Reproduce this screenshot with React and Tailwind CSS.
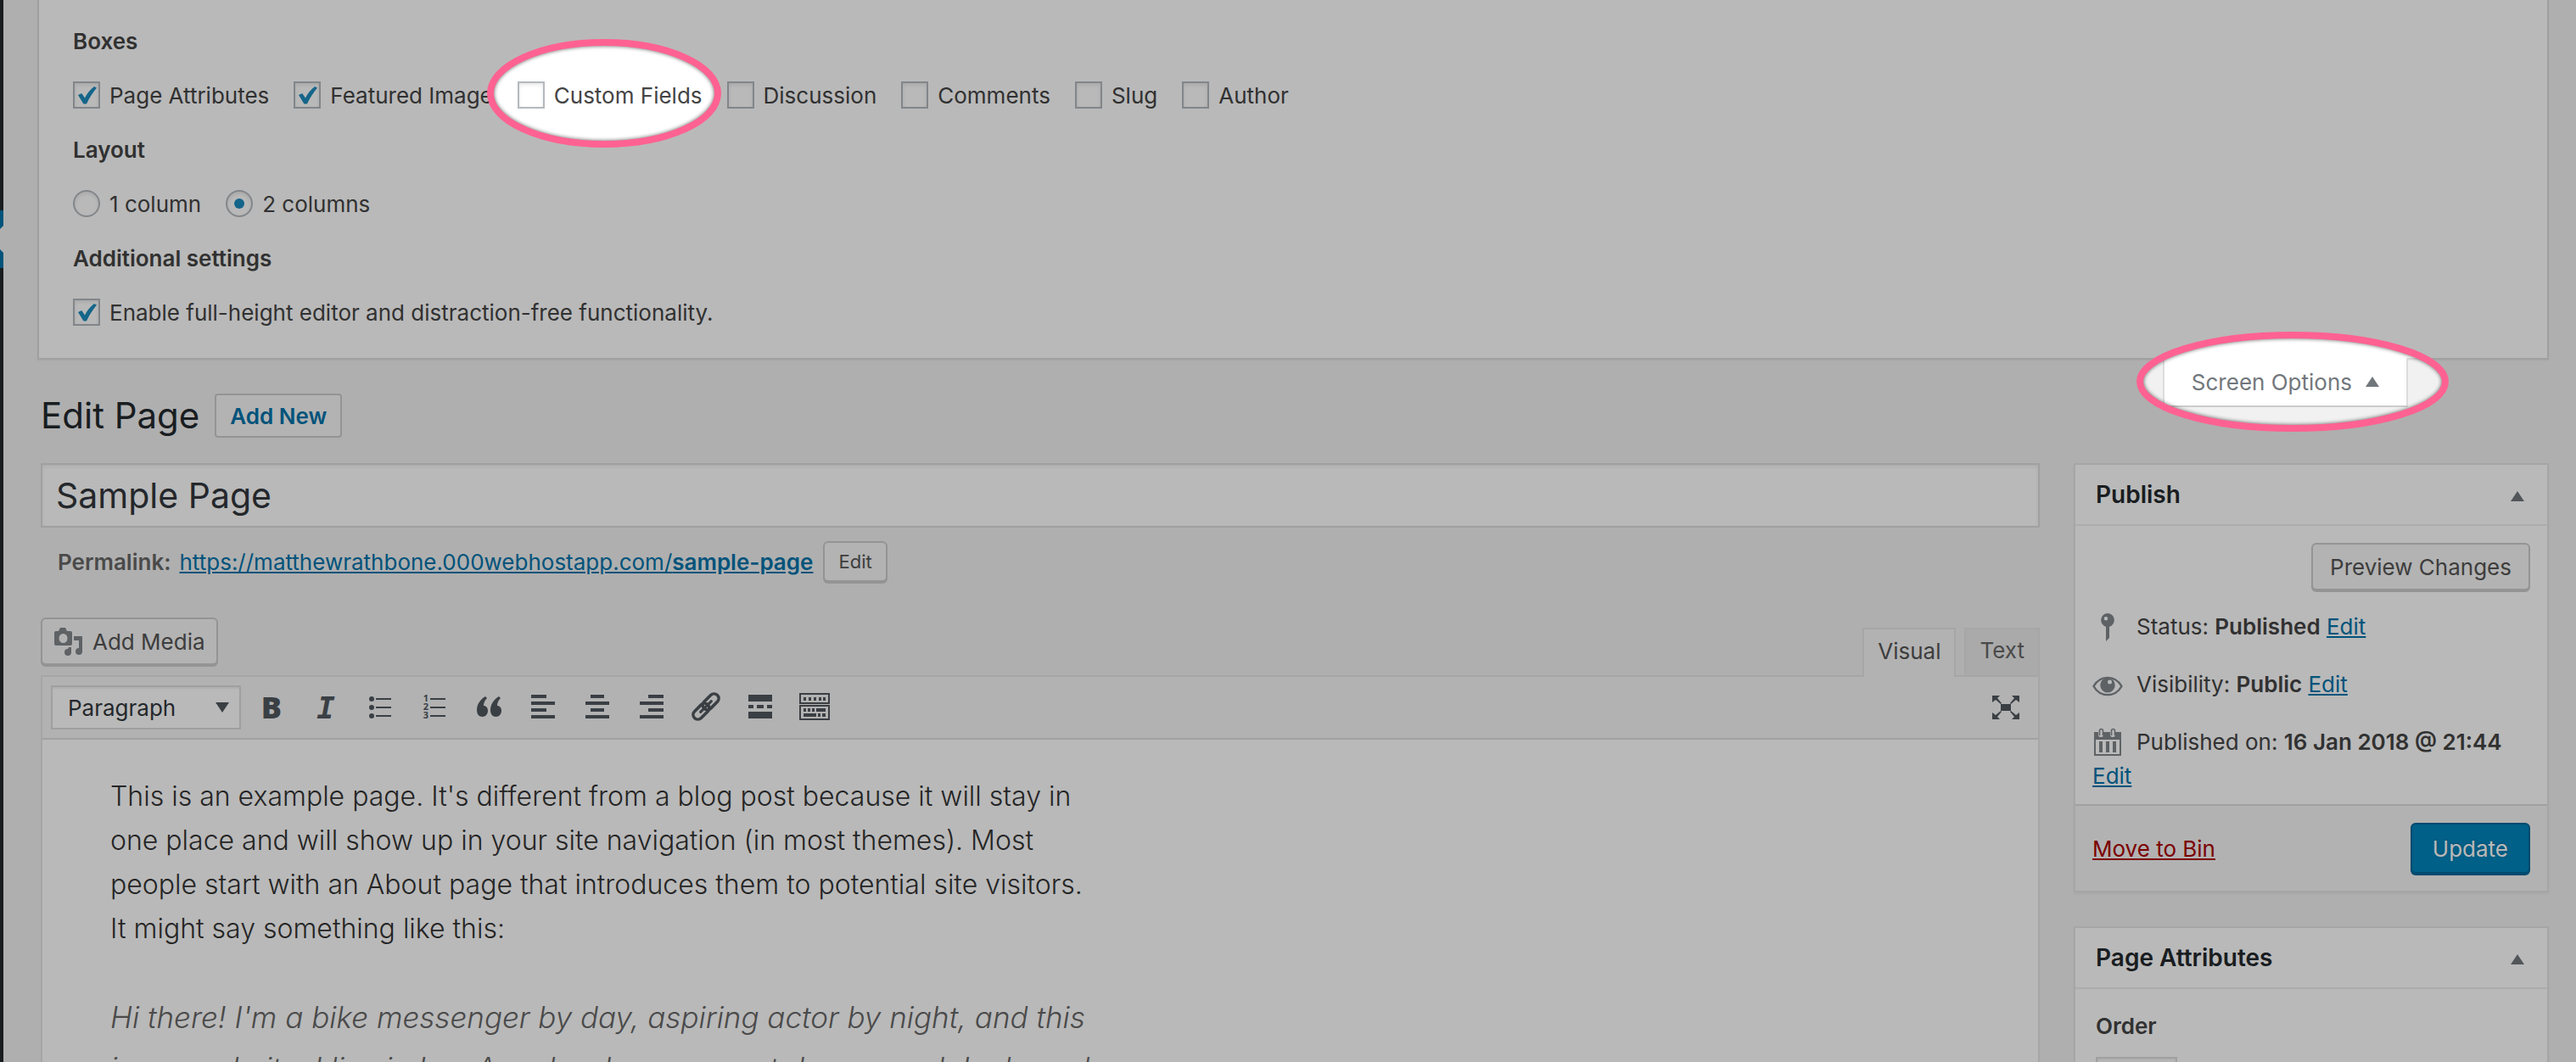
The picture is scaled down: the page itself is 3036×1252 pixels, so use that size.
import { useState } from "react";

const BOXES = [
  { id: "attributes", label: "Page Attributes", on: true },
  { id: "featured", label: "Featured Image", on: true },
  { id: "custom-fields", label: "Custom Fields" },
  { id: "discussion", label: "Discussion" },
  { id: "comments", label: "Comments" },
  { id: "slug", label: "Slug" },
  { id: "author", label: "Author" },
];

const LIGHT_BUTTON =
  "rounded-md border-2 border-[#ccc] bg-[#f7f7f7] text-[#555] shadow-[0_2px_0_#ccc]";

function Checkbox({ id, label, on }) {
  return (
    <label htmlFor={id} className="flex items-center gap-[11px]">
      <span className="grid size-8 place-items-center">
        <input
          id={id}
          type="checkbox"
          defaultChecked={on}
          className="peer col-start-1 row-start-1 size-8 appearance-none border-2 border-[#b4b9be] bg-white shadow-[inset_0_2px_4px_rgba(0,0,0,0.1)]"
        />
        <svg
          viewBox="0 0 32 32"
          className="pointer-events-none invisible col-start-1 row-start-1 size-8 fill-[#1e8cbe] peer-checked:visible"
        >
          <path d="M6 16l4.200-2 3.800 5.500C16.500 14.500 20 9.500 25 6l3 1.600C23.500 13 19.500 19 16 26.500h-3.600z" />
        </svg>
      </span>
      {label}
    </label>
  );
}

function Radio({ id, label, on }) {
  return (
    <label htmlFor={id} className="flex items-center gap-[11px]">
      <span className="grid size-8 place-items-center">
        <input
          id={id}
          type="radio"
          name="layout"
          defaultChecked={on}
          className="peer col-start-1 row-start-1 size-8 appearance-none rounded-full border-2 border-[#b4b9be] bg-white shadow-[inset_0_2px_4px_rgba(0,0,0,0.1)]"
        />
        <span className="pointer-events-none invisible col-start-1 row-start-1 size-3 rounded-full bg-[#1e8cbe] peer-checked:visible" />
      </span>
      {label}
    </label>
  );
}

function Triangle({ className }) {
  return (
    <svg viewBox="0 0 16 12" className={className} fill="currentColor">
      <path d="M8 0l8 12H0z" />
    </svg>
  );
}

function ToolIcon({ children }) {
  return (
    <svg viewBox="0 0 40 40" className="size-10 overflow-visible" fill="currentColor">
      {children}
    </svg>
  );
}

const TOOLS = [
  {
    name: "Bold",
    icon: (
      <text x="20" y="33" textAnchor="middle" fontFamily="Open Sans" fontWeight="800" fontSize="36">
        B
      </text>
    ),
  },
  {
    name: "Italic",
    icon: (
      <text x="20" y="33" textAnchor="middle" fontFamily="DejaVu Sans Mono" fontStyle="italic" fontWeight="700" fontSize="36">
        I
      </text>
    ),
  },
  {
    name: "Bulleted list",
    icon: (
      <>
        <circle cx="10" cy="10" r="3" />
        <circle cx="10" cy="20" r="3" />
        <circle cx="10" cy="30" r="3" />
        <path d="M15 9h18v2H15zM15 19h18v2H15zM15 29h18v2H15z" />
      </>
    ),
  },
  {
    name: "Numbered list",
    icon: (
      <>
        <g fontFamily="Open Sans" fontWeight="700" fontSize="11" textAnchor="middle">
          <text x="10" y="13">1</text>
          <text x="10" y="23">2</text>
          <text x="10" y="33">3</text>
        </g>
        <path d="M15 9h18v2H15zM15 19h18v2H15zM15 29h18v2H15z" />
      </>
    ),
  },
  {
    name: "Blockquote",
    icon: (
      <>
        <path d="M16 7l2 2c-3 3-4 6-4 9 3 0 5 2.500 5 6s-2.500 7-6.500 7S6 28 6 23c0-6 3.500-12 10-16z" />
        <path d="M32 7l2 2c-3 3-4 6-4 9 3 0 5 2.500 5 6s-2.500 7-6.500 7S22 28 22 23c0-6 3.500-12 10-16z" />
      </>
    ),
  },
  {
    name: "Align left",
    icon: <path d="M6 5h18v4H6zM6 13h28v4H6zM6 21h18v4H6zM6 29h28v4H6z" />,
  },
  {
    name: "Align centre",
    icon: <path d="M12 5h16v4H12zM6 13h28v4H6zM12 21h16v4H12zM6 29h28v4H6z" />,
  },
  {
    name: "Align right",
    icon: <path d="M16 5h18v4H16zM6 13h28v4H6zM16 21h18v4H16zM6 29h28v4H6z" />,
  },
  {
    name: "Insert link",
    icon: (
      <g transform="translate(20 19) rotate(-45)" fill="none" stroke="currentColor" strokeWidth="3.600">
        <rect x="-19" y="-5.500" width="22" height="11" rx="5.500" />
        <rect x="-3" y="-5.500" width="22" height="11" rx="5.500" />
        <path d="M-9 0H9" strokeWidth="3" strokeLinecap="round" />
      </g>
    ),
  },
  {
    name: "Read more tag",
    icon: <path d="M6 5h28v8H6zM6 17h6v4H6zM16 17h8v4h-8zM28 17h6v4h-6zM6 25h28v8H6z" />,
  },
  {
    name: "Toolbar toggle",
    icon: (
      <>
        <path d="M3 4h34v11H3zM3 18h34v16H3z" fill="none" stroke="currentColor" strokeWidth="2" />
        <path d="M7 8h3v4H7zM13 8h3v4h-3zM19 8h3v4h-3zM25 8h3v4h-3zM30 8h3v4h-3z" />
        <path d="M7 21h3v4H7zM12 21h3v4h-3zM17 21h3v4h-3zM22 21h11v4H22zM7 27h15v4H7zM24 27h3v4h-3zM29 27h4v4h-4z" />
      </>
    ),
  },
];

function ScreenOptions() {
  return (
    <section className="mr-8 ml-10 border-x-2 border-b-2 border-[#ddd] bg-white pt-4 pb-[22px] pl-10 shadow-[0_1px_2px_rgba(0,0,0,0.05)]">
      <h2 className="flex h-16 items-center font-semibold">Boxes</h2>
      <div className="flex h-16 items-center gap-[29px]">
        {BOXES.map((box) => (
          <Checkbox key={box.id} {...box} />
        ))}
      </div>
      <h2 className="flex h-16 items-center font-semibold">Layout</h2>
      <div className="flex h-16 items-center gap-[29px]">
        <Radio id="one-column" label="1 column" />
        <Radio id="two-columns" label="2 columns" on />
      </div>
      <h2 className="flex h-16 items-center font-semibold">Additional settings</h2>
      <div className="flex h-16 items-center">
        <Checkbox
          id="full-height"
          label="Enable full-height editor and distraction-free functionality."
          on
        />
      </div>
    </section>
  );
}

function Editor() {
  return (
    <div>
      <div className="flex h-[68px] justify-between">
        <button className={`flex h-14 items-center gap-[10px] px-[13px] ${LIGHT_BUTTON}`}>
          <svg viewBox="0 0 36 36" className="size-9" fill="#82878c">
            <path
              fillRule="evenodd"
              d="M8 2h6l2 4h4a2 2 0 0 1 2 2v13a2 2 0 0 1-2 2H3a2 2 0 0 1-2-2V8a2 2 0 0 1 2-2h3zM11.500 9a5 5.500 0 1 0 0 11 5 5.500 0 0 0 0-11z"
            />
            <path d="M24 12h10v18a4 4 0 1 1-4-4V17h-6zM21 25v6a4 4 0 1 1-4-4l1-2z" />
          </svg>
          Add Media
        </button>
        <div className="-mb-[2px] flex items-end gap-[10px]">
          <button className="h-[58px] border-2 border-b-0 border-[#e5e5e5] bg-[#f5f5f5] px-4 pb-[6px] text-[#555]">
            Visual
          </button>
          <button className="h-[58px] border-2 border-[#e5e5e5] bg-[#ebebeb] px-4 pb-[6px] text-[#666]">
            Text
          </button>
        </div>
      </div>
      <div className="border-2 border-[#e5e5e5] bg-white">
        <div className="flex h-[74px] items-center border-b-2 border-[#ddd] bg-[#f5f5f5] px-[10px] text-[#50575e]">
          <div className="mr-1 grid w-56 items-center">
            <select
              aria-label="Format"
              className="col-start-1 row-start-1 h-[52px] appearance-none border-2 border-[#ddd] bg-white pl-[18px] text-[#32373c] shadow-[inset_0_2px_2px_rgba(0,0,0,0.06)]"
            >
              <option>Paragraph</option>
              <option>Heading 1</option>
            </select>
            <Triangle className="pointer-events-none col-start-1 row-start-1 mr-[14px] h-3 w-4 rotate-180 justify-self-end" />
          </div>
          {TOOLS.map((tool) => (
            <button key={tool.name} aria-label={tool.name} className="grid w-16 place-items-center">
              <ToolIcon>{tool.icon}</ToolIcon>
            </button>
          ))}
          <button aria-label="Distraction-free writing mode" className="mr-2 ml-auto">
            <ToolIcon>
              <path d="M14 16h12v8H14z" />
              <path d="M4 6h9l-3 3 5 6-1 1-6-5-4 3zM36 6h-9l3 3-5 6 1 1 6-5 4 3zM4 34h9l-3-3 5-6-1-1-6 5-4-3zM36 34h-9l3-3-5-6 1-1 6 5 4-3z" />
            </ToolIcon>
          </button>
        </div>
        <div className="px-20 pt-[41px] text-[32px] leading-[52px] font-light text-[#333]">
          <p className="max-w-[1164px]">
            This is an example page. It's different from a blog post because it will stay in one
            place and will show up in your site navigation (in most themes). Most people start with
            an About page that introduces them to potential site visitors. It might say something
            like this:
          </p>
          <blockquote className="mt-12 max-w-[1164px] text-[35px] leading-[60px] text-[#666] italic">
            Hi there! I'm a bike messenger by day, aspiring actor by night, and this is my website. I
            live in Los Angeles, have a great dog named Jack, and I like piña coladas.
          </blockquote>
        </div>
      </div>
    </div>
  );
}

function Panel({ title, children }) {
  const [open, setOpen] = useState(true);

  return (
    <section className="border-2 border-[#e5e5e5] bg-white shadow-[0_2px_2px_rgba(0,0,0,0.04)]">
      <div className="flex h-[72px] items-center justify-between border-b-2 border-[#eee] pr-[27px] pl-6">
        <h2 className="text-[28px] font-semibold text-[#23282d]">{title}</h2>
        <button aria-label={`Toggle ${title}`} onClick={() => setOpen(!open)}>
          <Triangle className="mt-1 h-3 w-4 text-[#72777c]" />
        </button>
      </div>
      {open && children}
    </section>
  );
}

function EditLink() {
  return (
    <a href="#edit" className="text-[#0073aa] underline">
      Edit
    </a>
  );
}

function Publish() {
  return (
    <Panel title="Publish">
      <div className="px-5 pt-5 pb-[13px]">
        <div className="mb-[9px] flex justify-end">
          <button className={`h-14 px-5 ${LIGHT_BUTTON}`}>Preview Changes</button>
        </div>
        <p className="flex items-center py-[14px] leading-10">
          <svg viewBox="0 0 36 40" className="mr-4 h-10 w-9" fill="#82878c">
            <path
              fillRule="evenodd"
              d="M18 4a8 8 0 0 1 2 15.700V33l-4 4V19.700A8 8 0 0 1 18 4zM16 8a2.200 2.200 0 1 0 0 4.400A2.200 2.200 0 0 0 16 8z"
            />
          </svg>
          <span>
            Status: <b className="font-semibold">Published</b> <EditLink />
          </span>
        </p>
        <p className="flex items-center py-[14px] leading-10">
          <svg viewBox="0 0 36 40" className="mr-4 h-10 w-9">
            <path
              d="M1.500 22C9 8.500 27 8.500 34.500 22 27 35.500 9 35.500 1.500 22z"
              fill="none"
              stroke="#82878c"
              strokeWidth="2.400"
            />
            <path
              fillRule="evenodd"
              fill="#82878c"
              d="M18 12a8.500 8.500 0 1 1 0 17.500A8.500 8.500 0 0 1 18 12zM20.500 14.500a2.500 2.500 0 1 0 0 5 2.500 2.500 0 0 0 0-5z"
            />
          </svg>
          <span>
            Visibility: <b className="font-semibold">Public</b> <EditLink />
          </span>
        </p>
        <p className="pt-[14px] leading-10">
          <svg viewBox="0 0 36 40" className="mr-4 inline h-10 w-9 align-top" fill="#82878c">
            <path
              fillRule="evenodd"
              d="M2 8h5v3a3 3 0 0 0 6 0V8h8v3a3 3 0 0 0 6 0V8h7v28H2zM4 17v17h28V17z"
            />
            <path d="M8 19h4v13H8zM16 19h4v13h-4zM24 19h4v13h-4z" />
            <path
              d="M8.500 12V6.500a2 2 0 0 1 4 0V12M22.500 12V6.500a2 2 0 0 1 4 0V12"
              fill="none"
              stroke="#82878c"
              strokeWidth="1.600"
            />
          </svg>
          Published on: <b className="font-semibold">16 Jan 2018 @ 21:44</b> <EditLink />
        </p>
      </div>
      <div className="flex h-[102px] items-center justify-between border-t-2 border-[#ddd] bg-[#f5f5f5] px-5">
        <a href="#bin" className="text-[#a00] underline">
          Move to Bin
        </a>
        <button className="h-15 rounded-md border-2 border-[#006799] bg-[#0085ba] px-6 text-white shadow-[0_2px_0_#006799] text-shadow-[0_-1px_2px_#006799]">
          Update
        </button>
      </div>
    </Panel>
  );
}

// Dims the page, leaving two lit ellipses with a ring round each.
function Spotlights() {
  const spots = (
    <>
      <ellipse cx="712" cy="110" rx="134" ry="60" />
      <ellipse cx="100%" cy="450" rx="180" ry="55" transform="translate(-334 0)" />
    </>
  );

  return (
    <svg className="pointer-events-none absolute inset-0 h-full w-full">
      <defs>
        <mask id="holes" maskUnits="userSpaceOnUse" x="0" y="0" width="100%" height="100%">
          <rect width="100%" height="100%" fill="white" />
          <g fill="black">{spots}</g>
        </mask>
        <clipPath id="lit">{spots}</clipPath>
        <filter id="soft" filterUnits="userSpaceOnUse" x="0" y="0" width="100%" height="100%">
          <feGaussianBlur stdDeviation="2" />
        </filter>
      </defs>
      <rect width="100%" height="100%" fill="black" fillOpacity="0.275" mask="url(#holes)" />
      <g clipPath="url(#lit)">
        <g fill="none" stroke="black" strokeOpacity="0.500" strokeWidth="9" filter="url(#soft)">
          {spots}
        </g>
      </g>
      <g fill="none" stroke="#ff6292" strokeWidth="8">
        {spots}
      </g>
    </svg>
  );
}

export default function App() {
  const [title, setTitle] = useState("Sample Page");

  return (
    <div className="relative flex h-screen overflow-hidden bg-[#f1f1f1] font-['Inter',sans-serif] text-[26px] text-[#444]">
      <div className="w-1 shrink-0 bg-[#23282d] pt-[248px]">
        <svg viewBox="0 0 4 68" className="h-[68px] w-1">
          <path d="M0 0h4v68H0z" fill="#0073aa" />
          <path d="M4 18L0 22v24l4 4z" fill="#f1f1f1" />
        </svg>
      </div>

      <main className="min-w-0 flex-1">
        <ScreenOptions />

        <div className="flex items-start justify-between pl-11">
          <div className="flex items-center gap-[18px] pt-10 pb-[30px]">
            <h1 className="text-[42px] leading-[52px] text-[#23282d]">Edit Page</h1>
            <a
              href="#new"
              className="flex h-[52px] items-center rounded-sm border-2 border-[#ccc] bg-[#f7f7f7] px-4 font-semibold text-[#0073aa]"
            >
              Add New
            </a>
          </div>
          <button className="-mt-[2px] mr-[198px] flex h-[58px] items-center gap-4 border-2 border-t-0 border-[#ddd] border-b-[#ccc] bg-white px-8 text-[#72777c]">
            Screen Options
            <Triangle className="h-3 w-4" />
          </button>
        </div>

        <div className="flex items-start gap-10 pr-8 pl-11">
          <div className="min-w-0 flex-1">
            <input
              aria-label="Title"
              value={title}
              onChange={(e) => setTitle(e.target.value)}
              className="h-[76px] w-full border-2 border-[#ddd] bg-white px-4 text-[41px] text-[#32373c] shadow-[inset_0_2px_4px_rgba(0,0,0,0.07)]"
            />
            <div className="mt-[15px] mb-[41px] flex h-[50px] items-center pl-5 text-[#666]">
              <b className="mr-[10px] font-semibold">Permalink:</b>
              <a href="#permalink" className="text-[#0073aa] underline">
                https://matthewrathbone.000webhostapp.com/<b className="font-semibold">sample-page</b>
              </a>
              <button className={`ml-3 h-12 px-4 text-[22px] ${LIGHT_BUTTON}`}>Edit</button>
            </div>
            <Editor />
          </div>

          <aside className="flex w-[560px] shrink-0 flex-col gap-10">
            <Publish />
            <Panel title="Page Attributes">
              <div className="px-6 pt-6 pb-6">
                <label htmlFor="order" className="mb-4 block leading-10 font-semibold">
                  Order
                </label>
                <input
                  id="order"
                  defaultValue="0"
                  className="h-14 w-24 border-2 border-[#ddd] bg-white px-2 shadow-[inset_0_2px_4px_rgba(0,0,0,0.07)]"
                />
              </div>
            </Panel>
          </aside>
        </div>
      </main>

      <Spotlights />
    </div>
  );
}
